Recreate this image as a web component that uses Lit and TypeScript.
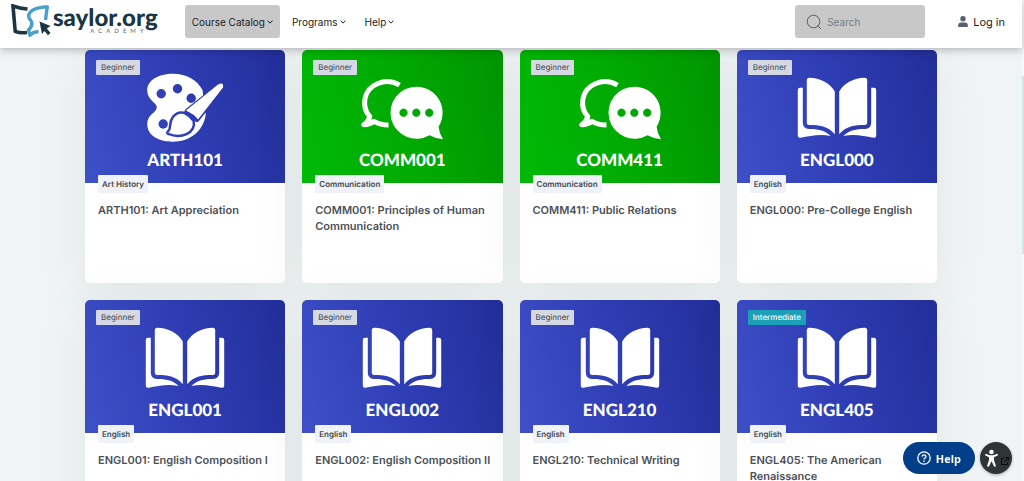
import { LitElement, html, css, svg, nothing } from "lit";
import { customElement, property } from "lit/decorators.js";
import { classMap } from "lit/directives/class-map.js";

type Art = "palette" | "chat" | "book";

interface Course {
  code: string;
  title: string;
  category: string;
  level: "Beginner" | "Intermediate";
  art: Art;
}

const courses: Course[] = [
  { code: "ARTH101", title: "Art Appreciation", category: "Art History", level: "Beginner", art: "palette" },
  { code: "COMM001", title: "Principles of Human Communication", category: "Communication", level: "Beginner", art: "chat" },
  { code: "COMM411", title: "Public Relations", category: "Communication", level: "Beginner", art: "chat" },
  { code: "ENGL000", title: "Pre-College English", category: "English", level: "Beginner", art: "book" },
  { code: "ENGL001", title: "English Composition I", category: "English", level: "Beginner", art: "book" },
  { code: "ENGL002", title: "English Composition II", category: "English", level: "Beginner", art: "book" },
  { code: "ENGL210", title: "Technical Writing", category: "English", level: "Beginner", art: "book" },
  { code: "ENGL405", title: "The American Renaissance", category: "English", level: "Intermediate", art: "book" },
];

const palette = svg`
  <defs>
    <mask id="cut" maskUnits="userSpaceOnUse" x="0" y="0" width="82" height="72">
      <rect width="82" height="72" fill="#fff" />
      <g fill="#000">
        <circle cx="16.2" cy="21.7" r="4.7" />
        <circle cx="32.5" cy="16.7" r="4.7" />
        <circle cx="46.2" cy="26.3" r="4.7" />
        <circle cx="18.2" cy="52" r="4.7" />
      </g>
      <g fill="#000" stroke="#000" stroke-width="5" stroke-linejoin="round">
        <path d="M75.5 12.6Q79 11 77.2 15L52 47.5 42 39.3Z" />
        <path d="M38.8 42Q33 40.5 29 45.5Q26.5 49 26.3 54Q26.2 58.5 23.5 60.7Q33 64.5 41 61Q49 57 47.5 49.5Z" />
      </g>
    </mask>
  </defs>
  <path mask="url(#cut)" d="M27.8 1.7C42 1.7 52 8 57.5 18L60.7 43C58 60 44 69.7 27.8 69.7C13 69.7 2.2 63 2.2 52C2.2 42 11.8 41 11.8 35C11.8 31 2.2 28 2.2 18.5C2.2 8 14 1.7 27.8 1.7Z" />
  <path d="M73 12.5Q79 9.5 78 15.5L53 47.5Q49 42 41 38.5Z" />
  <path d="M38.8 42Q33 40.5 29 45.5Q26.5 49 26.3 54Q26.2 58.5 23.5 60.7Q33 64.5 41 61Q49 57 47.5 49.5Q44 44.5 38.8 42Z" />`;

const chat = svg`
  <path fill="none" stroke="#fff" stroke-width="5" stroke-linejoin="round"
    d="M37.5 13.2C24 5 5 12 2.8 27.5C1.8 35 4 40.5 7.8 44.5Q6.5 49.5 1.8 52.8Q8 52.5 12 49.3Q18.5 53 26.5 53" />
  <path fill-rule="evenodd" d="M54.5 14.7A26 26 0 0 1 76.6 54.5Q77 61 81 67.3Q73.5 66.5 67.5 63.2A26 26 0 1 1 54.5 14.7ZM41.5 36.6a4.1 4.1 0 1 0 .01 0ZM54.3 36.6a4.1 4.1 0 1 0 .01 0ZM67.2 36.6a4.1 4.1 0 1 0 .01 0Z" />`;

const bookHalf = () => svg`
  <path d="M12.3 5.7C23 6 33 11 37.8 19.5V62.3C31 54 22 53 12.5 53Q9.8 53 9.8 50.5V8.2Q9.8 5.7 12.3 5.7Z" />
  <path d="M3 15.7H5.8V50.5Q5.8 57 12 57C21 56.7 28 58.5 33.7 64C23 61.5 13 64 3.5 65.7Q.8 66.2 .8 63.5V18Q.8 15.7 3 15.7Z" />`;

const book = svg`<g>${bookHalf()}</g><g transform="matrix(-1 0 0 1 80 0)">${bookHalf()}</g>`;

const art: Record<Art, unknown> = { palette, chat, book };

@customElement("course-card")
export class CourseCard extends LitElement {
  @property({ attribute: false }) course?: Course;

  static styles = css`
    :host { display: block; }
    .card {
      box-sizing: border-box;
      height: 100%;
      min-height: 233px;
      border-radius: 5px;
      background: #fff;
      box-shadow: 0 8px 50px rgba(70, 95, 90, 0.09);
      position: relative;
      display: flex;
      flex-direction: column;
      align-items: flex-start;
    }
    .cover {
      box-sizing: border-box;
      width: 100%;
      height: 133px;
      padding-top: 22px;
      border-radius: 5px 5px 0 0;
      display: flex;
      flex-direction: column;
      align-items: center;
      gap: 4px;
      color: #fff;
      background: linear-gradient(75deg, #3e50c8 0%, #2f3db4 50%, #222e98 100%);
      text-decoration: none;
    }
    .green { background: linear-gradient(75deg, #00ba06 0%, #00aa03 50%, #009500 100%); }
    .art { width: 80px; height: 72px; fill: #fff; overflow: visible; flex: none; }
    .code { font: 900 17px/24px Lato, sans-serif; }
    .level {
      position: absolute;
      left: 11px;
      top: 10px;
      padding: 0 5px;
      border-radius: 1px;
      background: #d5d9e3;
      color: #42484f;
      font-size: 8px;
      line-height: 15px;
    }
    .mid { background: #1ba0b8; color: #fff; font-weight: 500; }
    .category {
      position: relative;
      margin: -8px 0 0 13px;
      padding: 0 4px;
      border-radius: 1px;
      background: #eff2f9;
      color: #42484f;
      font-size: 8px;
      font-weight: 600;
      line-height: 18px;
    }
    .title {
      margin: 9px 8px 16px 13px;
      font-size: 11px;
      font-weight: 600;
      line-height: 16px;
    }
    .title a { color: #4b5157; text-decoration: none; }
  `;

  render() {
    const c = this.course;
    if (!c) return nothing;
    return html`
      <article class="card">
        <a class=${classMap({ cover: true, green: c.art === "chat" })} href="#${c.code}">
          <svg class="art" viewBox="0 0 80 72" aria-hidden="true">${art[c.art]}</svg>
          <span class="code">${c.code}</span>
        </a>
        <span class=${classMap({ level: true, mid: c.level === "Intermediate" })}>${c.level}</span>
        <span class="category">${c.category}</span>
        <h3 class="title"><a href="#${c.code}">${`${c.code}: ${c.title}`}</a></h3>
      </article>
    `;
  }
}

@customElement("app-root")
export class AppRoot extends LitElement {
  static styles = css`
    :host {
      display: grid;
      grid-template-columns: 1fr 2px;
      height: 100vh;
      overflow: hidden;
      background: #f1f4f5;
      font-family: Inter, sans-serif;
      text-rendering: geometricPrecision;
      color: #1d2125;
    }
    .page { display: flex; flex-direction: column; min-width: 0; min-height: 0; }
    .rail { background: #f5f9fa; padding-top: 76px; }
    .thumb { height: 178px; background: #d3e4e8; }
    .bar {
      position: relative;
      z-index: 2;
      box-sizing: border-box;
      flex: none;
      height: 48px;
      padding: 0 17px 0 11px;
      display: flex;
      align-items: center;
      background: #fff;
      box-shadow: 0 2px 8px rgba(0, 0, 0, 0.25);
    }
    .brand { display: flex; align-items: center; gap: 2px; padding-bottom: 8px; color: #1b3542; text-decoration: none; }
    .mark { width: 40px; height: 33px; }
    .words { display: flex; flex-direction: column; align-items: flex-end; }
    .name { font: 900 24px/24px Lato, sans-serif; }
    .sub { font: 400 6px/6px Lato, sans-serif; letter-spacing: 4px; padding-right: 10px; margin-top: -1px; color: #59636b; }
    .nav { display: flex; gap: 5px; margin-left: 27px; }
    button { font: inherit; border: 0; cursor: pointer; }
    .item {
      height: 33px;
      padding: 0 7px;
      display: flex;
      align-items: center;
      gap: 2px;
      border-radius: 3px;
      background: none;
      color: #1d2125;
      font-size: 10px;
    }
    .active { background: #c8c8c8; }
    .chev { width: 6px; height: 4px; fill: none; stroke: currentColor; }
    .search {
      box-sizing: border-box;
      width: 130px;
      height: 33px;
      margin-left: auto;
      padding: 0 11px;
      display: flex;
      align-items: center;
      gap: 5px;
      border-radius: 3px;
      background: #c8c8c8;
    }
    .search, .nav, .login { margin-bottom: 5px; }
    .lens { width: 16px; height: 16px; fill: none; stroke: #56606e; flex: none; }
    .field { min-width: 0; flex: 1; border: 0; padding: 0; background: none; outline: none; font: 10px Inter, sans-serif; color: #333; }
    .field::placeholder { color: #777c82; opacity: 1; }
    .login { display: flex; align-items: center; gap: 5px; margin-left: 33px; color: #1d2125; font-size: 11px; text-decoration: none; }
    .user { width: 10px; height: 11px; fill: #56606e; }
    .main { flex: 1; min-height: 0; overflow-y: auto; scrollbar-width: none; padding: 2px 85px 17px; }
    .grid {
      display: grid;
      grid-template-columns: repeat(auto-fill, minmax(190px, 1fr));
      gap: 17px;
    }
    .float { position: fixed; z-index: 3; right: 12px; bottom: 7px; display: flex; gap: 5px; align-items: center; }
    .help {
      height: 32px;
      padding: 0 14px;
      display: flex;
      align-items: center;
      gap: 5px;
      border-radius: 16px;
      background: #023f88;
      color: #fff;
      font: 700 11px "Open Sans", sans-serif;
    }
    .q { width: 14px; height: 14px; }
    .access { width: 32px; height: 32px; padding: 0; border-radius: 50%; background: #2f3537; display: flex; box-shadow: 0 1px 3px rgba(0, 0, 0, 0.3); }
    .person { width: 32px; height: 32px; }
  `;

  private menu(label: string, active = false) {
    return html`<button class=${classMap({ item: true, active })}>
      ${label}<svg class="chev" viewBox="0 0 6 4" aria-hidden="true"><path d="M.5 .7 3 3.1 5.5 .7" /></svg>
    </button>`;
  }

  render() {
    return html`
      <div class="page">
        <header class="bar">
          <a class="brand" href="#home">
            <svg class="mark" viewBox="0 0 40 33" fill="none" aria-hidden="true">
              <path d="M16.5 5Q9 4.500 2 2L4.200 27.300Q9 29.300 16 28.500" stroke="#1b3542" stroke-width="3.600" />
              <path d="M36.5 2.800Q23 3.500 19 8.500Q16 12.500 19.500 16Q23 20.500 17.500 26L19 31.200Q22 28 27.500 27.500M36.400 1.500 34.500 16" stroke="#4aa0cc" stroke-width="3.400" />
              <path d="M28.500 17.500 39.500 22 35.800 24.500 39.500 29 37 31.300 33.500 27 31 30Z" fill="#1b3542" />
            </svg>
            <span class="words"><span class="name">saylor.org</span><span class="sub">ACADEMY</span></span>
          </a>
          <nav class="nav">${this.menu("Course Catalog", true)}${this.menu("Programs")}${this.menu("Help")}</nav>
          <label class="search">
            <svg class="lens" viewBox="0 0 16 16" aria-hidden="true"><circle cx="7.500" cy="7.500" r="6.300" /><path d="m12 12 3 3" /></svg>
            <input class="field" type="search" placeholder="Search" aria-label="Search" />
          </label>
          <a class="login" href="#login">
            <svg class="user" viewBox="0 0 10 11" aria-hidden="true"><circle cx="5" cy="2.800" r="2.700" /><path d="M.2 11V9.500Q.2 6.500 3.200 6.500H6.800Q9.800 6.500 9.800 9.500V11Z" /></svg>
            Log in
          </a>
        </header>
        <main class="main">
          <div class="grid">${courses.map((c) => html`<course-card .course=${c}></course-card>`)}</div>
        </main>
      </div>
      <div class="rail"><div class="thumb"></div></div>
      <div class="float">
        <button class="help">
          <svg class="q" viewBox="0 0 14 14" fill="none" stroke="#fff" stroke-width="1.300" aria-hidden="true">
            <circle cx="7" cy="7" r="6.200" /><path d="M5 5.600Q5.200 3.800 7 3.800T9 5.500Q9 6.600 7.800 7.100Q7 7.500 7 8.500M7 9.600V10.900" />
          </svg>
          Help
        </button>
        <button class="access" aria-label="Accessibility">
          <svg class="person" viewBox="0 0 32 32" aria-hidden="true">
            <circle cx="11.500" cy="10" r="2.300" fill="#fff" />
            <path d="M5.500 11.800 10 13.200H13L17.500 11.800 18 13.300 14 15.200V18L16 24.300 14.200 24.800 11.700 19.500H11.300L8.800 24.800 7 24.300 9 18V15.200L5 13.300Z" fill="#fff" />
            <path d="M24 16.500H21.500V22.500H27.500V20M25.300 15.500H28.500V18.700M28.200 15.800 24.300 19.700" fill="none" stroke="#0c0e0f" stroke-width="1.100" />
          </svg>
        </button>
      </div>
    `;
  }
}
